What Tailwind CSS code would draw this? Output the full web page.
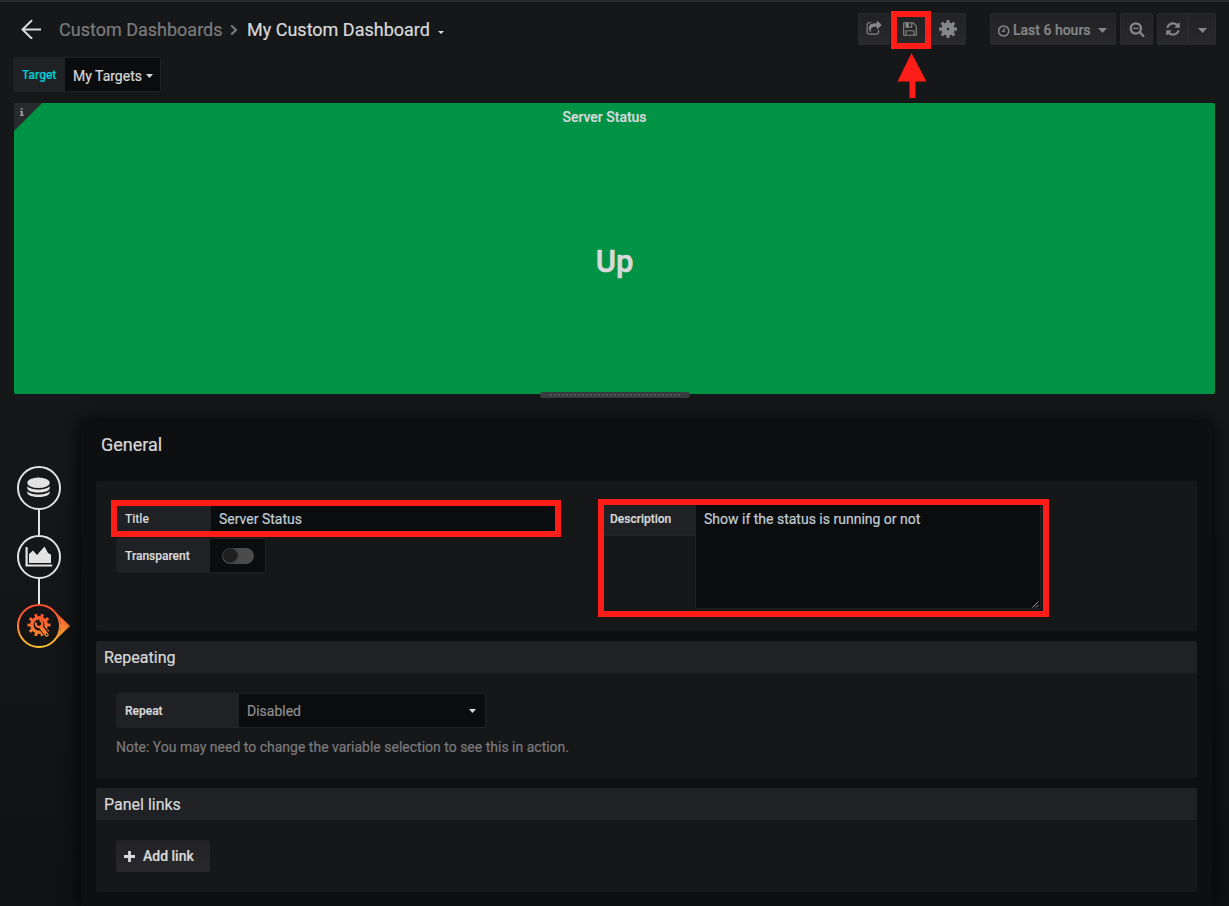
<!DOCTYPE html>
<html lang="en">
<head>
<meta charset="utf-8">
<title>My Custom Dashboard</title>
<script src="https://cdn.jsdelivr.net/npm/@tailwindcss/browser@4"></script>
</head>
<body class="relative h-[906px] w-[1229px] overflow-hidden bg-linear-to-b from-[#161719] via-[#161719] via-50% to-[#101113] font-['Roboto',sans-serif] text-[14px] text-[#d8d9da] [-webkit-text-stroke:0.2px]">
<div class="flex h-[906px] flex-col border-t-2 border-[#292a2d]">
  <!-- Top navigation -->
  <header class="flex h-[54px] items-center pr-[13px] pl-[21px]">
    <svg class="mr-[18px] h-5 w-5" viewBox="0 0 20 20" fill="none" stroke="#d8d9da" stroke-width="2" stroke-linecap="round" stroke-linejoin="round"><path d="M19.5 10.5H1.5M10.5 1.7 1.5 10.5l9 8.8"/></svg>
    <span class="w-[164px] pt-[2px] text-[18px] leading-6 whitespace-nowrap text-[#7b7b7d]">Custom Dashboards</span>
    <svg class="mr-[9px] ml-[7px] mt-[2px] h-3 w-2" viewBox="0 0 8 12" fill="none" stroke="#7b7b7d" stroke-width="2.2"><path d="M1.2 1.5 6 6l-4.800 4.500"/></svg>
    <span class="w-[183px] pt-[2px] text-[18px] leading-6 whitespace-nowrap">My Custom Dashboard</span>
    <svg class="mt-[7px] ml-[8px] h-[3px] w-[6px]" viewBox="0 0 6 3" fill="#d8d9da"><path d="M0 0h6L3 3z"/></svg>
    <div class="ml-auto flex h-8 text-[#858687]">
      <div class="flex h-8 w-8 items-center justify-center rounded-xs border border-[#2a2a2c] bg-linear-to-b from-[#222224] to-[#29292b] pr-[1px]">
        <svg class="h-4 w-4" viewBox="0 0 1792 1792" fill="currentColor"><path d="M1472 989v259q0 119-84.5 203.5t-203.5 84.5h-832q-119 0-203.5-84.5t-84.5-203.5v-832q0-119 84.5-203.5t203.5-84.5h255q13 0 22.5 9.5t9.5 22.5q0 27-26 32-77 26-133 60-10 4-16 4h-112q-66 0-113 47t-47 113v832q0 66 47 113t113 47h832q66 0 113-47t47-113v-214q0-19 18-29 28-13 54-37 16-16 35-8 21 9 21 29zm237-496l-384 384q-18 19-45 19-12 0-25-5-39-17-39-59v-192h-160q-323 0-438 131-119 137-74 473 3 23-20 34-8 2-12 2-16 0-26-13-10-14-21-31t-39.5-68.5-49.5-99.5-38.5-114-17.5-122q0-49 3.500-91t14-90 28-88 47-81.500 68.500-74 94.500-61.500 124.500-48.500 159.500-30.500 196.500-11h160v-192q0-42 39-59 13-5 25-5 26 0 45 19l384 384q19 19 19 45t-19 45z"/></svg>
      </div>
      <div class="ml-1 flex h-8 w-[34px] items-center justify-center bg-linear-to-b from-[#222224] to-[#29292b] pr-[2px]">
        <svg class="h-4 w-4" viewBox="0 0 1792 1792" fill="currentColor"><path d="M512 1536h768v-384h-768v384zm896 0h128v-896q0-14-10-38.500t-20-34.500l-281-281q-10-10-34-20t-39-10v416q0 40-28 68t-68 28h-576q-40 0-68-28t-28-68v-416h-128v1280h128v-416q0-40 28-68t68-28h832q40 0 68 28t28 68v416zm-384-928v-320q0-13-9.500-22.500t-22.500-9.500h-192q-13 0-22.500 9.500t-9.500 22.500v320q0 13 9.500 22.500t22.500 9.500h192q13 0 22.500-9.500t9.500-22.500zm640 32v928q0 40-28 68t-68 28h-1344q-40 0-68-28t-28-68v-1344q0-40 28-68t68-28h928q40 0 88 20t76 48l280 280q28 28 48 76t20 88z"/></svg>
      </div>
      <div class="ml-[2px] flex h-8 w-9 items-center justify-center rounded-xs border border-[#2a2a2c] bg-linear-to-b from-[#222224] to-[#29292b]">
        <svg class="h-[18px] w-[18px]" viewBox="0 0 18 18" fill="none" stroke="currentColor"><circle cx="9" cy="9" r="4" stroke-width="5.500"/><circle cx="9" cy="9" r="7.500" stroke-width="3" pathLength="80" stroke-dasharray="5 5" stroke-dashoffset="2.500"/></svg>
      </div>
      <div class="ml-6 flex h-8 w-[126px] items-center rounded-xs border border-[#2a2a2c] bg-linear-to-b from-[#222224] to-[#29292b] pl-[7px]">
        <svg class="mt-[3px] h-3 w-3" viewBox="0 0 12 12" fill="none" stroke="currentColor" stroke-width="1.500"><circle cx="5.700" cy="6" r="5.100"/><path d="M6.100 3v3.400H3.700" stroke-width="1.200"/></svg>
        <span class="ml-[3px] w-[78px] pt-[2px] text-[14px] font-medium whitespace-nowrap">Last 6 hours</span>
        <svg class="mt-[3px] ml-[7px] h-[5px] w-[9px]" viewBox="0 0 9 5" fill="currentColor"><path d="M0 0h9L4.500 5z"/></svg>
      </div>
      <div class="ml-1 flex h-8 w-[33px] items-center justify-center rounded-xs border border-[#2a2a2c] bg-linear-to-b from-[#222224] to-[#29292b]">
        <svg class="h-4 w-4" viewBox="0 0 1792 1792" fill="currentColor"><path d="M1088 800v64q0 13-9.500 22.500t-22.500 9.500h-576q-13 0-22.500-9.500t-9.500-22.500v-64q0-13 9.500-22.500t22.500-9.500h576q13 0 22.500 9.500t9.500 22.500zm128 32q0-185-131.500-316.500t-316.500-131.500-316.500 131.500-131.500 316.500 131.500 316.500 316.500 131.500 316.500-131.500 131.500-316.500zm512 832q0 53-37.500 90.500t-90.500 37.500q-54 0-90-38l-343-342q-179 124-399 124-143 0-273.500-55.500t-225-150-150-225-55.500-273.500 55.500-273.500 150-225 225-150 273.500-55.500 273.500 55.500 225 150 150 225 55.500 273.500q0 220-124 399l343 343q37 37 37 90z"/></svg>
      </div>
      <div class="ml-1 flex h-8 w-[59px] rounded-xs border border-[#2a2a2c] bg-linear-to-b from-[#222224] to-[#29292b]">
        <div class="flex w-[31px] items-center justify-center border-r border-[#2e2e30]"><svg class="h-4 w-4" viewBox="0 0 1792 1792" fill="currentColor"><path d="M1639 1056q0 5-1 7-64 268-268 434.500t-478 166.500q-146 0-282.500-55t-243.500-157l-129 129q-19 19-45 19t-45-19-19-45v-448q0-26 19-45t45-19h448q26 0 45 19t19 45-19 45l-137 137q71 66 161 102t187 36q134 0 250-65t186-179q11-17 53-117 8-23 30-23h192q13 0 22.500 9.500t9.500 22.500zm25-800v448q0 26-19 45t-45 19h-448q-26 0-45-19t-19-45 19-45l138-138q-148-137-349-137-134 0-250 65t-186 179q-11 17-53 117-8 23-30 23h-199q-13 0-22.500-9.500t-9.500-22.500v-7q65-268 270-434.500t480-166.500q146 0 284 55.500t245 156.500l130-129q19-19 45-19t45 19 19 45z"/></svg></div>
        <div class="flex flex-1 items-center justify-center pt-[2px]"><svg class="h-[5px] w-[9px]" viewBox="0 0 9 5" fill="currentColor"><path d="M0 0h9L4.500 5z"/></svg></div>
      </div>
    </div>
  </header>

  <!-- Template variables -->
  <div class="mt-[1px] ml-[13px] flex h-[35px] w-[148px] overflow-hidden rounded-xs border border-[#202124] bg-[#0b0c0e]">
    <div class="flex w-[51px] items-center bg-[#202124] pt-[1px] pl-[8px] text-[12px] font-medium text-[#02c8d1]">Target</div>
    <div class="flex flex-1 items-center pt-[3px] pl-[8px] whitespace-nowrap"><span class="w-[69px]">My Targets</span><svg class="ml-1 h-1 w-[7px]" viewBox="0 0 7 4" fill="#d8d9da"><path d="M0 0h7L3.500 4z"/></svg></div>
  </div>

  <!-- Singlestat panel -->
  <section class="relative mx-[14px] mt-[11px] flex h-[291px] shrink-0 flex-col items-center rounded-xs bg-[#009245]">
    <div class="pt-[5px] pr-5 text-[14px] leading-[18px] font-medium">Server Status</div>
    <div class="mt-[118px] text-[31px] leading-9 font-medium [-webkit-text-stroke:0.6px]">Up</div>
    <svg class="absolute top-0 left-0 h-7 w-7" viewBox="0 0 28 28"><path d="M0 0h28L0 28z" fill="#292a2e"/><path d="M6.700 5.200h2v1.600h-2zM6 8h2.800v3.800h.9V13H6v-1.200h.9V9.200H6z" fill="#9a9b9d"/></svg>
    <svg class="absolute -bottom-1 left-[526px] h-[6px] w-[150px]" viewBox="0 0 150 6"><rect width="150" height="6" rx="3" fill="#3a3b3d"/><path d="M10 3h132" stroke="#515254" stroke-width="2" stroke-dasharray="2 2"/></svg>
  </section>

  <!-- Panel editor -->
  <main class="mt-7 flex flex-1">
    <nav class="w-[81px] shrink-0">
      <svg class="mt-[43px] ml-[16px] h-[184px] w-[56px]" viewBox="0 0 56 184" fill="none">
        <defs><linearGradient id="warm" gradientUnits="userSpaceOnUse" x1="0" y1="139" x2="0" y2="183"><stop stop-color="#ff4e2e"/><stop offset=".2" stop-color="#ff5430"/><stop offset="1" stop-color="#ffc832"/></linearGradient>
        <linearGradient id="gearwarm" gradientUnits="userSpaceOnUse" x1="0" y1="148" x2="0" y2="175"><stop stop-color="#ff5230"/><stop offset="1" stop-color="#ff902b"/></linearGradient></defs>
        <path d="M23 45v25M23 114v25" stroke="#e3e3e3" stroke-width="2"/>
        <g stroke="#e3e3e3" stroke-width="2"><circle cx="23" cy="23" r="21"/><circle cx="23" cy="92" r="21"/></g>
        <g fill="#e3e3e3"><ellipse cx="22.500" cy="17.800" rx="11.300" ry="5.300"/>
        <path d="M11.300 21c2 4.600 20.400 4.600 22.400 0v2c0 6-22.400 6-22.400 0zM11.300 26c2 4.600 20.400 4.600 22.400 0v1.500c0 6-22.400 6-22.400 0z"/>
        <path d="M9.500 82h2.200v17.500h24.500v2H9.500zM13 98v-9l4-3.500 4 4.500 7.500-8.500 3.500 6.500 3 1.500V98z"/></g>
        <circle cx="23" cy="161" r="21" fill="#131416" stroke="url(#warm)" stroke-width="2"/>
        <path d="M38 145.500 54 161 38 176.500A20.500 20.500 0 0 0 38 145.500z" fill="url(#warm)"/>
        <g stroke="url(#gearwarm)"><circle cx="23" cy="160" r="7.200" stroke-width="3.400"/><circle cx="23" cy="160" r="9.900" stroke-width="3.200" pathLength="100" stroke-dasharray="4.500 5.500" stroke-dashoffset="2.250"/></g>
        <path d="m26 163 7 9.500" stroke="#131416" stroke-width="6"/>
        <path d="m25 162 5.800 7.800" stroke="url(#gearwarm)" stroke-width="3.800" stroke-linecap="round"/>
        <path d="M20 157.500a3.300 3.300 0 1 0 3.500-2" stroke="url(#gearwarm)" stroke-width="2.200"/>
        <circle cx="30.600" cy="169.500" r=".9" fill="#131416"/>
      </svg>
    </nav>
    <div class="w-[1131px] rounded-t-xs bg-[#0e0f11] px-[15px] shadow-[0_0_20px_black]">
      <h1 class="ml-[5px] pt-[11px] pb-[24px] text-[18px] leading-6">General</h1>
      <section class="flex h-[150px] rounded-xs bg-[#161719] pt-[21px] pl-5">
        <div class="w-[485px]">
          <div class="relative flex h-[33px] w-[440px]">
            <div class="flex w-[95px] items-center rounded-l-xs bg-[#202124] pl-[9px] text-[12px] font-medium [-webkit-text-stroke:0]">Title</div>
            <div class="flex flex-1 items-center bg-[#0b0c0e] pt-[2px] pl-2 text-[#c1cdd6]">Server Status</div>
            <div class="absolute -top-[2px] -left-[5px] h-[37px] w-[450px] border-6 border-[#ff1d17]"></div>
          </div>
          <div class="mt-[3px] flex h-[35px] w-[150px] overflow-hidden rounded-xs border border-[#202124] bg-[#0b0c0e]">
            <div class="flex w-[93px] items-center bg-[#202124] pl-[8px] text-[12px] font-medium">Transparent</div>
            <div class="flex flex-1 items-center justify-center"><div class="h-4 w-8 rounded-full bg-[#4b4b4b] p-[1.500px]"><div class="h-[13px] w-[13px] rounded-full bg-[#1f1f20] shadow-[1px_0_3px_black]"></div></div></div>
          </div>
        </div>
        <div class="relative flex h-[107px] w-[442px] items-start">
          <div class="flex h-[34px] w-[94px] items-center border-b border-[#242528] bg-[#202124] pl-[9px] text-[12px] font-medium">Description</div>
          <div class="relative h-[107px] w-[346px] border border-[#202124] bg-[#0b0c0e] pt-[7px] pl-[8px] leading-[18px] text-[#c1cdd6]">Show if the status is running or not
            <svg class="absolute right-[1px] bottom-0 h-[7px] w-[7px]" viewBox="0 0 7 7" stroke="#b5b5b5" stroke-width=".9"><path d="m.500 6.500 6-6M4 6.500l2.500-2.500"/></svg>
          </div>
          <div class="absolute -top-[3px] -left-[3px] h-[118px] w-[451px] border-6 border-[#ff1d17]"></div>
        </div>
      </section>
      <section class="mt-[10px] h-[137px] overflow-hidden rounded-xs bg-[#161719]">
        <h2 class="h-8 bg-[#202124] pl-2 text-[16px] leading-[34px]">Repeating</h2>
        <div class="mt-5 ml-5 flex h-[35px] w-[370px] overflow-hidden rounded-xs border border-[#202124] bg-[#0b0c0e]">
          <div class="flex w-[122px] items-center bg-[#202124] pl-[8px] text-[12px] font-medium">Repeat</div>
          <div class="flex flex-1 items-center justify-between pt-[2px] pr-[9px] pl-[8px] text-[#8e8e8e]">Disabled<svg class="mb-[2px] h-1 w-[7px]" viewBox="0 0 7 4" fill="#d8d9da"><path d="M0 0h7L3.500 4z"/></svg></div>
        </div>
        <p class="mt-[9px] ml-5 leading-5 text-[#7b7b7d]">Note: You may need to change the variable selection to see this in action.</p>
      </section>
      <section class="mt-[10px] h-[104px] overflow-hidden rounded-xs bg-[#161719]">
        <h2 class="h-8 bg-[#202124] pl-2 text-[16px] leading-[34px]">Panel links</h2>
        <div class="mt-5 ml-5 flex h-8 w-[94px] items-center rounded-xs bg-linear-to-b from-[#222224] to-[#29292b] pl-2 font-medium whitespace-nowrap">
          <svg class="mr-2 h-[11px] w-[11px]" viewBox="0 0 11 11" stroke="#d8d9da" stroke-width="2.800"><path d="M0 5.500h11M5.500 0v11"/></svg>Add link
        </div>
      </section>
    </div>
  </main>
</div>
<!-- Callout on the save button -->
<div class="absolute top-[11px] left-[891px] h-[38px] w-10 border-6 border-[#ff1d17]"></div>
<svg class="absolute top-[53px] left-[897px] h-[45px] w-[30px]" viewBox="0 0 30 45" fill="#ff1d17"><path d="M14.500 0 29.500 28.500h-11V45h-6V28.500H.500z"/></svg>
</body>
</html>
